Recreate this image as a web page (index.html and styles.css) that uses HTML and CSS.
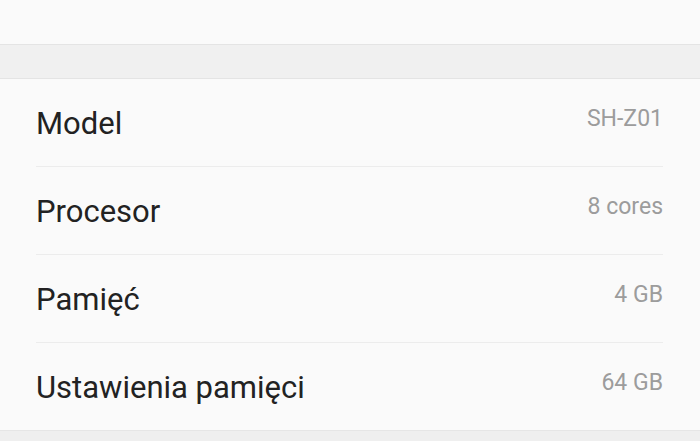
FILE: index.html
```html
<!DOCTYPE html>
<html lang="pl">
<head>
<meta charset="utf-8">
<link rel="stylesheet" href="styles.css">
</head>
<body>
<div class="top"></div>
<div class="band"></div>
<ul class="list">
  <li class="row"><span class="label">Model</span><span class="value">SH-Z01</span></li>
  <li class="row"><span class="label">Procesor</span><span class="value">8 cores</span></li>
  <li class="row"><span class="label">Pamięć</span><span class="value">4 GB</span></li>
  <li class="row"><span class="label">Ustawienia pamięci</span><span class="value">64 GB</span></li>
</ul>
<div class="bottom"></div>
</body>
</html>
```
FILE: styles.css
```css
html, body {
  margin: 0;
  padding: 0;
  background: #fafafa;
  font-family: Roboto, "Noto Sans", sans-serif;
}
.top {
  height: 44px;
  background: #fafafa;
  border-bottom: 1px solid #e4e4e4;
}
.band {
  height: 33px;
  background: #f0f0f0;
  border-bottom: 1px solid #e4e4e4;
}
.list {
  list-style: none;
  margin: 0;
  padding: 0 37px 0 36px;
  background: #fafafa;
}
.row {
  display: flex;
  justify-content: space-between;
  align-items: flex-start;
  height: 87px;
  border-bottom: 1px solid #ececec;
  box-sizing: content-box;
}
.row:last-child {
  border-bottom: none;
}
.label {
  font-size: 31px;
  line-height: 36px;
  color: #222222;
  padding-top: 27px;
}
.value {
  font-size: 23px;
  line-height: 26px;
  color: #9c9c9c;
  padding-top: 27px;
}
.bottom {
  height: 10px;
  background: #efefef;
  border-top: 1px solid #e6e6e6;
}
```
